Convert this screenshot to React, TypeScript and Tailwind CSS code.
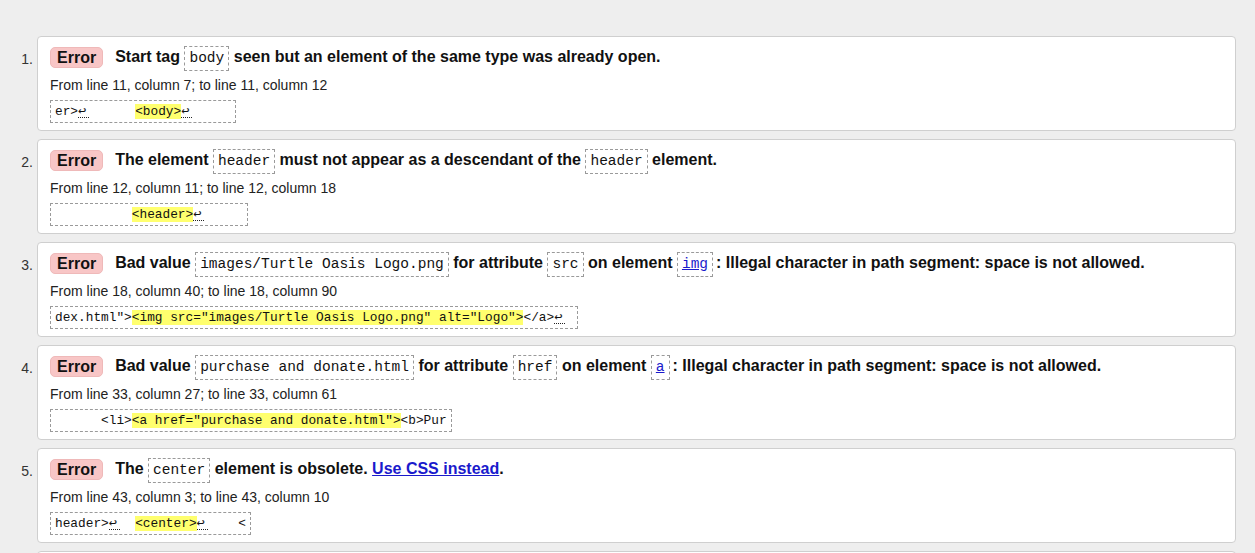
import React from "react";

const Code = ({ children, className = "" }: { children: React.ReactNode; className?: string }) => (
  <code
    className={`inline-block border border-dashed border-[#9a9a9a] px-[4px] h-[25px] leading-[23px] align-middle text-[14.5px] font-normal text-[#111] ${className}`}
    style={{ fontFamily: '"Liberation Mono", "DejaVu Sans Mono", monospace' }}
  >
    {children}
  </code>
);

const LF = () => (
  <span
    className="inline-block w-[11px] h-[16px] leading-[16px] border-b border-dotted border-[#222] overflow-visible text-[13.5px] align-baseline"
    style={{ fontFamily: '"DejaVu Sans Mono", monospace' }}
  >
    ↩
  </span>
);

const Hl = ({ children }: { children: React.ReactNode }) => (
  <span className="bg-[#ffff6e]">{children}</span>
);

const Extract = ({ children }: { children: React.ReactNode }) => (
  <div
    className="inline-block border border-dashed border-[#9a9a9a] h-[23px] leading-[21px] pl-[4px] pr-[4px] text-[12.8px] text-[#111] whitespace-pre"
    style={{ fontFamily: '"Liberation Mono", "DejaVu Sans Mono", monospace' }}
  >
    {children}
  </div>
);

type Item = { msg: React.ReactNode; loc: string; ext: React.ReactNode };

const items: Item[] = [
  {
    msg: (
      <>
        Start tag <Code>body</Code> seen but an element of the same type was already open.
      </>
    ),
    loc: "From line 11, column 7; to line 11, column 12",
    ext: (
      <>
        {"er>"}
        <LF />
        {"      "}
        <Hl>{"<body>"}</Hl>
        <LF />
        {"     "}
      </>
    ),
  },
  {
    msg: (
      <>
        The element <Code>header</Code> must not appear as a descendant of the <Code>header</Code> element.
      </>
    ),
    loc: "From line 12, column 11; to line 12, column 18",
    ext: (
      <>
        {"          "}
        <Hl>{"<header>"}</Hl>
        <LF />
        {"     "}
      </>
    ),
  },
  {
    msg: (
      <>
        Bad value <Code>images/Turtle Oasis Logo.png</Code> for attribute <Code>src</Code> on element{" "}
        <Code className="mr-[3px]">
          <span className="text-[#1a1acc] underline">img</span>
        </Code>
        : Illegal character in path segment: space is not allowed.
      </>
    ),
    loc: "From line 18, column 40; to line 18, column 90",
    ext: (
      <>
        {'dex.html">'}
        <Hl>{'<img src="images/Turtle Oasis Logo.png" alt="Logo">'}</Hl>
        {"</a>"}
        <LF />
        {" "}
      </>
    ),
  },
  {
    msg: (
      <>
        Bad value <Code>purchase and donate.html</Code> for attribute <Code>href</Code> on element{" "}
        <Code className="mr-[3px]">
          <span className="text-[#1a1acc] underline">a</span>
        </Code>
        : Illegal character in path segment: space is not allowed.
      </>
    ),
    loc: "From line 33, column 27; to line 33, column 61",
    ext: (
      <>
        {"      <li>"}
        <Hl>{'<a href="purchase and donate.html">'}</Hl>
        {"<b>Pur"}
      </>
    ),
  },
  {
    msg: (
      <>
        The <Code>center</Code> element is obsolete.{" "}
        <span className="text-[#1a1acc] underline">Use CSS instead</span>.
      </>
    ),
    loc: "From line 43, column 3; to line 43, column 10",
    ext: (
      <>
        {"header>"}
        <LF />
        {"  "}
        <Hl>{"<center>"}</Hl>
        <LF />
        {"    <"}
      </>
    ),
  },
];

export default function App() {
  return (
    <div
      className="bg-[#eeeeee] pt-[36px] pr-[19px] overflow-hidden h-[553px]"
      style={{ fontFamily: '"Liberation Sans", Arial, sans-serif' }}
    >
      <ol className="flex flex-col gap-[8px]">
        {items.map((it, i) => (
          <li key={i} className="flex">
            <div className="w-[37px] shrink-0 pr-[4px] text-right text-[14px] text-[#333] pt-[15px] leading-[17px]">
              {i + 1}.
            </div>
            <div className="flex-1 bg-white border border-[#cfcfcf] rounded-[4px] pt-[7px] pb-[8px] pl-[12px] pr-[12px] h-[95px]">
              <div className="flex items-center h-[25px]">
                <span className="bg-[#f8c6c6] border border-[#efb9b9] rounded-[5px] h-[21px] leading-[19px] px-[6px] text-[16px] font-bold text-[#111] mr-[12px] mt-[2px]">
                  Error
                </span>
                <span className="text-[16px] font-bold text-[#111] leading-[25px] whitespace-nowrap pt-[2px]">{it.msg}</span>
              </div>
              <div className="mt-[8px] text-[14px] leading-[17px] text-[#222]">{it.loc}</div>
              <div className="mt-[4px]">
                <Extract>{it.ext}</Extract>
              </div>
            </div>
          </li>
        ))}
        <li className="flex">
          <div className="w-[37px] shrink-0" />
          <div className="flex-1 bg-white border border-[#cfcfcf] rounded-[4px] h-[95px]" />
        </li>
      </ol>
    </div>
  );
}
